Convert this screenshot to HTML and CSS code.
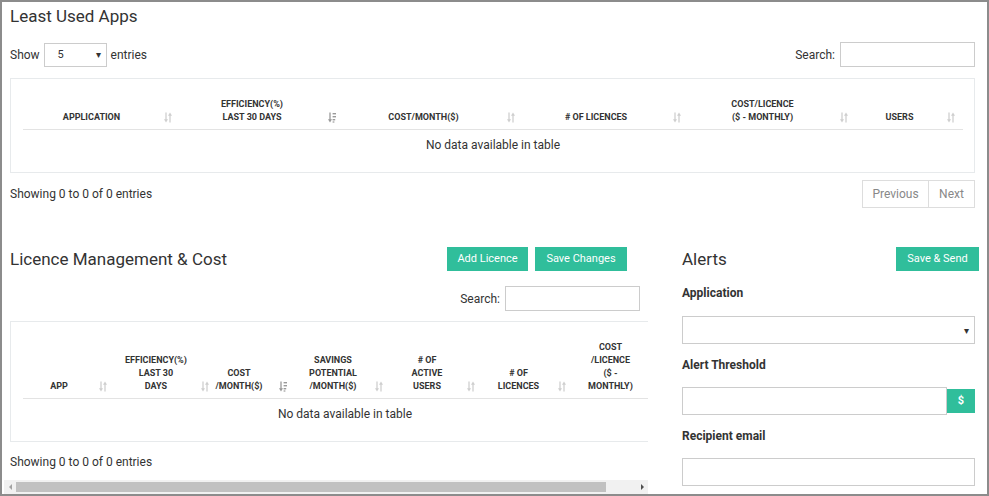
FILE: index.html
```html
<!DOCTYPE html>
<html lang="en">
<head>
<meta charset="utf-8">
<title>Licences</title>
<link rel="stylesheet" href="styles.css">
</head>
<body>
<svg class="defs" width="0" height="0" aria-hidden="true">
  <symbol id="sort" viewBox="0 0 8 11">
    <path d="M2 0.5V8" stroke="currentColor" stroke-width="1.3"/>
    <path d="M0 7.3H4L2 10.5Z" fill="currentColor"/>
    <path d="M6 10.5V3" stroke="currentColor" stroke-width="1.3"/>
    <path d="M4 3.7H8L6 0.5Z" fill="currentColor"/>
  </symbol>
  <symbol id="sortdown" viewBox="0 0 8 11">
    <path d="M2 0.5V8" stroke="currentColor" stroke-width="1.3"/>
    <path d="M0 7.3H4L2 10.5Z" fill="currentColor"/>
    <rect x="4.6" y="1" width="3.4" height="1.4" fill="currentColor"/>
    <rect x="4.6" y="4" width="3.4" height="1.4" fill="currentColor"/>
    <rect x="4.6" y="7" width="2.6" height="1.4" fill="currentColor"/>
    <rect x="4.6" y="9.4" width="1.8" height="1.2" fill="currentColor"/>
  </symbol>
</svg>
<div class="frame">
  <section class="least">
    <h2 class="title">Least Used Apps</h2>
    <div class="controls">
      <div class="length">Show <div class="select select-sm"><span>5</span><span class="caret">&#9662;</span></div> entries</div>
      <div class="search">Search: <input class="input search-input" type="text"></div>
    </div>
    <div class="table-box">
      <table class="dt dt1">
        <colgroup><col class="c157"><col class="c164"><col class="c179"><col class="c166"><col class="c167"><col class="c107"></colgroup>
        <thead>
          <tr>
            <th><div class="th"><span>Application</span><svg class="si"><use href="#sort"/></svg></div></th>
            <th><div class="th"><span>Efficiency(%)<br>Last 30 Days</span><svg class="si on"><use href="#sortdown"/></svg></div></th>
            <th><div class="th"><span>Cost/Month($)</span><svg class="si"><use href="#sort"/></svg></div></th>
            <th><div class="th"><span># of Licences</span><svg class="si"><use href="#sort"/></svg></div></th>
            <th><div class="th"><span>Cost/Licence<br>($ - Monthly)</span><svg class="si"><use href="#sort"/></svg></div></th>
            <th><div class="th"><span>Users</span><svg class="si"><use href="#sort"/></svg></div></th>
          </tr>
        </thead>
        <tbody>
          <tr><td class="empty" colspan="6">No data available in table</td></tr>
        </tbody>
      </table>
    </div>
    <div class="footer">
      <div class="info">Showing 0 to 0 of 0 entries</div>
      <div class="pager"><span class="pg prev">Previous</span><span class="pg next">Next</span></div>
    </div>
  </section>

  <div class="bottom">
    <section class="licence">
      <div class="head">
        <h2 class="title">Licence Management &amp; Cost</h2>
        <div class="btns">
          <span class="btn btn-add">Add Licence</span>
          <span class="btn btn-save">Save Changes</span>
        </div>
      </div>
      <div class="search-row">
        <div class="search">Search: <input class="input search-input" type="text"></div>
      </div>
      <div class="scroller">
        <div class="table-box wide">
          <table class="dt dt2">
            <colgroup><col class="c92"><col class="c88"><col class="c92"><col class="c96"><col class="c92"><col class="c91"><col class="c93"></colgroup>
            <thead>
              <tr>
                <th><div class="th"><span>App</span><svg class="si"><use href="#sort"/></svg></div></th>
                <th><div class="th"><span>Efficiency(%)<br>Last 30<br>Days</span><svg class="si"><use href="#sort"/></svg></div></th>
                <th><div class="th"><span>Cost<br>/Month($)</span><svg class="si on"><use href="#sortdown"/></svg></div></th>
                <th><div class="th"><span>Savings<br>Potential<br>/Month($)</span><svg class="si"><use href="#sort"/></svg></div></th>
                <th><div class="th"><span># of<br>Active<br>Users</span><svg class="si"><use href="#sort"/></svg></div></th>
                <th><div class="th"><span># of<br>Licences</span><svg class="si"><use href="#sort"/></svg></div></th>
                <th><div class="th"><span>Cost<br>/Licence<br>($ -<br>Monthly)</span><svg class="si"><use href="#sort"/></svg></div></th>
              </tr>
            </thead>
            <tbody>
              <tr><td class="empty" colspan="7">No data available in table</td></tr>
            </tbody>
          </table>
        </div>
      </div>
      <div class="info info2">Showing 0 to 0 of 0 entries</div>
      <div class="scrollbar">
        <span class="sb-arrow sb-left"></span>
        <span class="sb-thumb"></span>
        <span class="sb-fill"></span>
        <span class="sb-arrow sb-right"></span>
      </div>
    </section>

    <section class="alerts">
      <div class="head">
        <h2 class="title">Alerts</h2>
        <span class="btn btn-send">Save &amp; Send</span>
      </div>
      <div class="label first">Application</div>
      <div class="select field-select"><span></span><span class="caret">&#9662;</span></div>
      <div class="label">Alert Threshold</div>
      <div class="ig field-row">
        <input class="input field" type="text">
        <span class="addon">$</span>
      </div>
      <div class="label">Recipient email</div>
      <input class="input field field-row" type="text">
    </section>
  </div>
</div>
</body>
</html>
```
FILE: styles.css
```css
* { box-sizing: border-box; }
html, body { margin: 0; padding: 0; }
body {
  font-family: Roboto, "Liberation Sans", Arial, sans-serif;
  font-size: 12px;
  color: #333;
  background: #fff;
}
.defs { position: absolute; width: 0; height: 0; overflow: hidden; }

.frame {
  width: 989px;
  height: 496px;
  border: 2px solid #8c8c8c;
  padding: 0 12px 0 8px;
  overflow: hidden;
}

.title {
  margin: 3px 0 0;
  font-size: 17px;
  font-weight: 400;
  line-height: 22px;
  color: #333;
}

.controls {
  display: flex;
  justify-content: space-between;
  align-items: center;
  height: 25px;
  margin-top: 15px;
}
.length { display: flex; align-items: center; gap: 4px; }
.select {
  display: flex;
  align-items: center;
  justify-content: space-between;
  border: 1px solid #ccc;
  background: #fff;
}
.select-sm {
  width: 63px;
  height: 24px;
  padding: 0 5px 0 13px;
  font-size: 11px;
}
.caret { font-size: 10px; color: #333; }

.search { display: flex; align-items: center; gap: 5px; }
.input {
  border: 1px solid #ccc;
  background: #fff;
  font: inherit;
  outline: none;
  margin: 0;
  padding: 0 8px;
}
.search-input { width: 135px; height: 25px; }

.table-box {
  border: 1px solid #e7eaec;
  padding: 10px 11px 12px 12px;
  margin-top: 11px;
}
.dt { border-collapse: collapse; table-layout: fixed; width: 100%; }
.dt th {
  font-size: 9px;
  font-weight: 700;
  text-transform: uppercase;
  line-height: 13px;
  padding: 9px 8px 5px 10px;
  vertical-align: bottom;
  border-bottom: 1px solid #e3e3e3;
  color: #333;
}
.th { display: flex; align-items: flex-end; }
.th span { flex: 1; text-align: center; margin-right: 14px; }
.si { width: 8px; height: 11px; flex: none; margin-bottom: 1px; color: #cfcfcf; }
.si.on { color: #9a9a9a; }
.empty {
  text-align: center;
  padding: 8px;
  line-height: 14px;
  font-size: 12px;
  color: #333;
}

.c157 { width: 157px; } .c164 { width: 164px; } .c179 { width: 179px; }
.c166 { width: 166px; } .c167 { width: 167px; } .c107 { width: 107px; }
.c92 { width: 92px; } .c88 { width: 88px; } .c96 { width: 96px; }
.c91 { width: 91px; } .c93 { width: 93px; }

.footer {
  display: flex;
  justify-content: space-between;
  align-items: center;
  height: 28px;
  margin-top: 7px;
}
.info { line-height: 14px; }
.pager { display: flex; }
.pg {
  height: 28px;
  line-height: 26px;
  border: 1px solid #ddd;
  text-align: center;
  color: #888;
}
.prev { width: 67px; }
.next { width: 46px; border-left: none; }

.bottom { display: flex; gap: 34px; margin-top: 39px; }
.licence { width: 638px; flex: none; }
.alerts { flex: 1; }
.head {
  display: flex;
  justify-content: space-between;
  align-items: center;
  height: 24px;
}
.head .title { margin: 0; line-height: 24px; }
.btns { display: flex; gap: 7px; margin-right: 21px; }
.btn {
  display: block;
  height: 24px;
  line-height: 24px;
  text-align: center;
  background: #30be9b;
  color: #fff;
  font-size: 11px;
}
.btn-add { width: 81px; }
.btn-save { width: 92px; }
.btn-send { width: 83px; margin-right: -4px; }

.search-row { display: flex; justify-content: flex-end; margin: 15px 8px 0 0; }
.scroller { width: 638px; overflow: hidden; margin-top: 10px; }
.table-box.wide { width: 669px; margin-top: 0; }
.info2 { margin-top: 13px; }

.scrollbar {
  display: flex;
  align-items: center;
  width: 644px;
  height: 14px;
  margin: 11px 0 0 -6px;
  background: #f1f1f1;
}
.sb-arrow { width: 12px; height: 14px; flex: none; position: relative; }
.sb-left::after, .sb-right::after {
  content: "";
  position: absolute;
  top: 4px;
  border-top: 3px solid transparent;
  border-bottom: 3px solid transparent;
}
.sb-left::after { left: 5px; border-right: 3px solid #a3a3a3; }
.sb-right::after { left: 5px; border-left: 3px solid #505050; }
.sb-thumb { width: 590px; height: 10px; background: #c1c1c1; flex: none; }
.sb-fill { flex: 1; }

.label {
  font-weight: 700;
  font-size: 12px;
  line-height: 14px;
  margin-top: 14px;
}
.label.first { margin-top: 15px; }
.field { height: 28px; width: 100%; display: block; }
.field-select { height: 28px; margin-top: 16px; padding: 0 5px 0 10px; }
.field-row { margin-top: 15px; }
.ig { display: flex; align-items: center; }
.ig .field { flex: 1; width: auto; }
.addon {
  width: 28px;
  height: 24px;
  flex: none;
  background: #30be9b;
  color: #fff;
  font-weight: 700;
  font-size: 11px;
  line-height: 24px;
  text-align: center;
}
```
